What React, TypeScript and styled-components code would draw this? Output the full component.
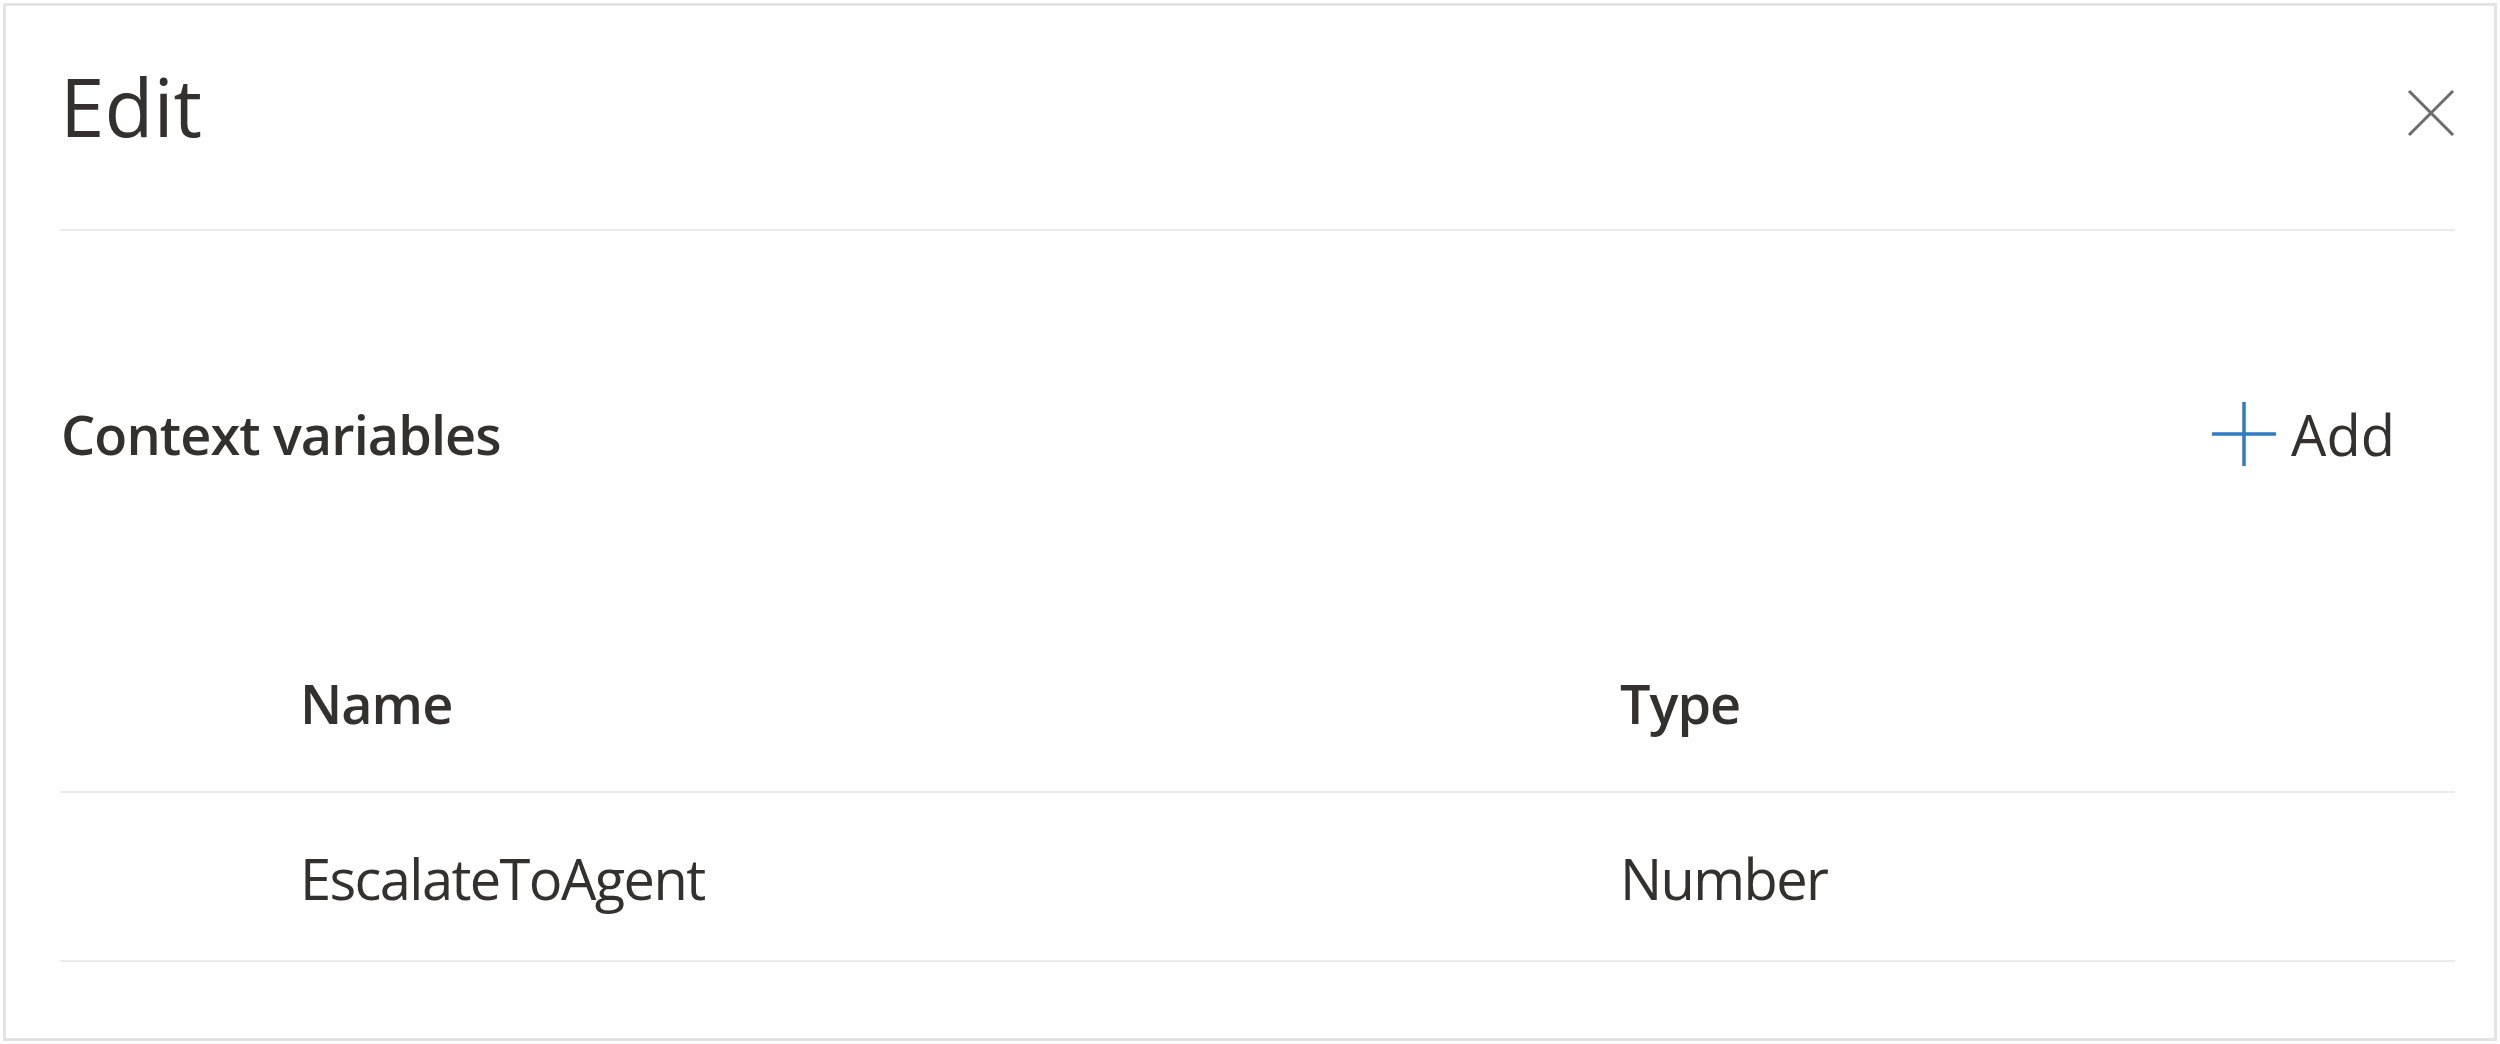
import React from "react";
import styled, { createGlobalStyle } from "styled-components";

const GlobalStyle = createGlobalStyle`
  html, body { margin: 0; padding: 0; background: #ffffff; }
  body {
    font-family: "Open Sans", "Noto Sans", "Liberation Sans", sans-serif;
    color: #323130;
  }
  * { box-sizing: border-box; }
`;

const Frame = styled.div`
  margin: 3px;
  height: 1038px;
  border: 3px solid #e3e3e3;
  padding: 0 39px 0 54px;
  background: #ffffff;
`;

const Header = styled.header`
  display: flex;
  justify-content: space-between;
  align-items: flex-start;
  height: 225px;
  padding-top: 60px;
  border-bottom: 2px solid #ebebeb;
`;

const Title = styled.h1`
  margin: 0;
  font-size: 80px;
  line-height: 80px;
  font-weight: 400;
  color: #323130;
`;

const CloseButton = styled.button`
  margin-top: 23px;
  width: 48px;
  height: 48px;
  padding: 0;
  border: none;
  background: transparent;
  display: flex;
  cursor: pointer;
`;

const Toolbar = styled.div`
  display: flex;
  align-items: center;
  justify-content: space-between;
  height: 393px;
  padding: 12px 60px 0 1px;
`;

const SectionTitle = styled.h2`
  margin: 0;
  font-size: 54px;
  line-height: 54px;
  font-weight: 600;
  letter-spacing: -0.9px;
  color: #323130;
`;

const AddButton = styled.button`
  display: flex;
  align-items: center;
  gap: 15px;
  padding: 0;
  border: none;
  background: transparent;
  font-family: inherit;
  font-size: 56px;
  line-height: 56px;
  color: #323130;
  cursor: pointer;
`;

const Table = styled.div`
  display: flex;
  flex-direction: column;
`;

const Row = styled.div<{ $head?: boolean }>`
  display: grid;
  grid-template-columns: 1320px 1fr;
  align-items: center;
  height: 169px;
  padding-left: 240px;
  padding-top: ${(p) => (p.$head ? "0" : "2px")};
  padding-bottom: ${(p) => (p.$head ? "10px" : "0")};
  border-bottom: 2px solid #ebebeb;
  font-size: ${(p) => (p.$head ? "54px" : "56px")};
  line-height: 1;
  font-weight: ${(p) => (p.$head ? 600 : 400)};
  letter-spacing: ${(p) => (p.$head ? "-1px" : "-1.6px")};
  color: #323130;
`;

const Cell = styled.div`
  white-space: nowrap;
`;

const CloseIcon = () => (
  <svg width="48" height="48" viewBox="0 0 48 48" fill="none">
    <path d="M2 2 L46 46 M46 2 L2 46" stroke="#6b6b6b" strokeWidth="3" />
  </svg>
);

const PlusIcon = () => (
  <svg width="64" height="64" viewBox="0 0 64 64" fill="none">
    <path d="M32 0 V64 M0 32 H64" stroke="#2f7bc4" strokeWidth="3.5" />
  </svg>
);

const rows = [{ name: "EscalateToAgent", type: "Number" }];

export default function App() {
  return (
    <>
      <GlobalStyle />
      <Frame>
        <Header>
          <Title>Edit</Title>
          <CloseButton aria-label="Close">
            <CloseIcon />
          </CloseButton>
        </Header>
        <Toolbar>
          <SectionTitle>Context variables</SectionTitle>
          <AddButton>
            <PlusIcon />
            <span>Add</span>
          </AddButton>
        </Toolbar>
        <Table>
          <Row $head>
            <Cell>Name</Cell>
            <Cell>Type</Cell>
          </Row>
          {rows.map((r) => (
            <Row key={r.name}>
              <Cell>{r.name}</Cell>
              <Cell>{r.type}</Cell>
            </Row>
          ))}
        </Table>
      </Frame>
    </>
  );
}
